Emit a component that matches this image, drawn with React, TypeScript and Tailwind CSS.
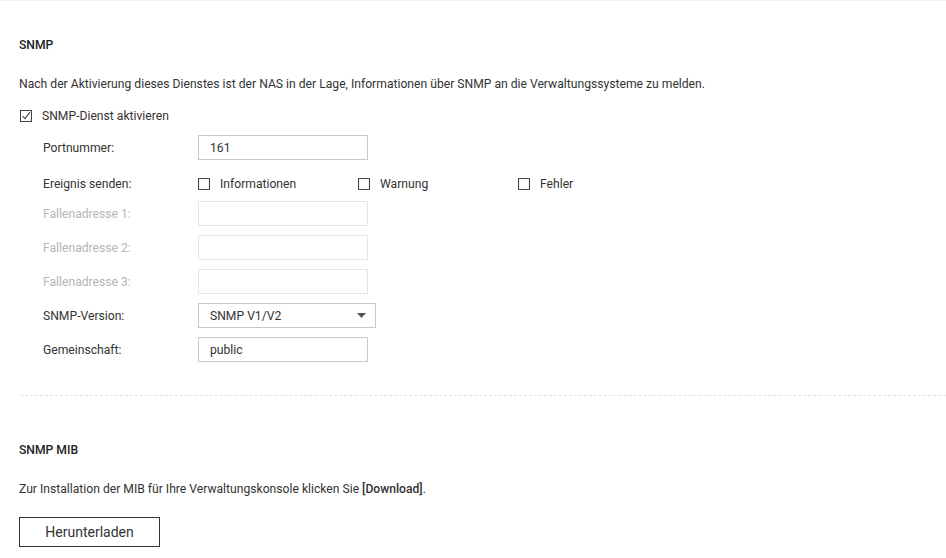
import React from 'react';

function Box({ checked, disabled }: { checked?: boolean; disabled?: boolean }) {
  return (
    <svg width="12" height="12" viewBox="0 0 12 12" className="shrink-0">
      <rect x="0.5" y="0.5" width="11" height="11" fill="#fff" stroke={disabled ? '#ccc' : '#444'} />
      {checked && <path d="M2.5 6.2 L5 8.7 L10 2.2" fill="none" stroke="#444" strokeWidth="1.1" />}
    </svg>
  );
}

function Row({ label, disabled, children }: { label: string; disabled?: boolean; children: React.ReactNode }) {
  return (
    <div className="flex items-center h-[25px] mb-[9px]">
      <div className={`w-[155px] pl-[24px] pt-px box-content ${disabled ? 'text-[#b5b5b5]' : ''}`}>{label}</div>
      {children}
    </div>
  );
}

function Field({ value, disabled }: { value?: string; disabled?: boolean }) {
  return (
    <div
      className={`w-[170px] h-[25px] border flex items-center px-[11px] pt-px ${
        disabled ? 'border-[#e6e6e6]' : 'border-[#c8c8c8]'
      }`}
    >
      {value}
    </div>
  );
}

export default function App() {
  return (
    <div
      className="w-[946px] h-[558px] bg-white text-[12.15px] text-[#333] overflow-hidden"
      style={{ fontFamily: 'Roboto, "Liberation Sans", sans-serif' }}
    >
      <div className="h-px bg-[#eef3fb]" />
      <div className="pl-[19px]">
        <h2 className="mt-[37px] leading-[14px] font-medium text-[#222]">SNMP</h2>
        <p className="mt-[25px] leading-[14px]">
          Nach der Aktivierung dieses Dienstes ist der NAS in der Lage, Informationen über SNMP an die Verwaltungssysteme zu melden.
        </p>
        <label className="mt-[18px] flex items-center h-[14px] gap-[10px] pl-px">
          <Box checked />
          <span>SNMP-Dienst aktivieren</span>
        </label>

        <div className="mt-[12px] flex flex-col">
          <Row label="Portnummer:">
            <Field value="161" />
          </Row>
          <div className="flex items-center h-[12px] mt-[9px] mb-[11px]">
            <div className="w-[155px] pl-[24px] box-content">Ereignis senden:</div>
            {['Informationen', 'Warnung', 'Fehler'].map((t) => (
              <div key={t} className="w-[160px] flex items-center gap-[10px]">
                <Box />
                <span>{t}</span>
              </div>
            ))}
          </div>
          <Row label="Fallenadresse 1:" disabled>
            <Field disabled />
          </Row>
          <Row label="Fallenadresse 2:" disabled>
            <Field disabled />
          </Row>
          <Row label="Fallenadresse 3:" disabled>
            <Field disabled />
          </Row>
          <Row label="SNMP-Version:">
            <div className="w-[178px] h-[25px] border border-[#c8c8c8] flex items-center justify-between pl-[11px] pr-[9px]">
              <span className="pt-px">SNMP V1/V2</span>
              <svg width="9" height="5" viewBox="0 0 9 5">
                <path d="M0 0 H9 L4.5 5 Z" fill="#555" />
              </svg>
            </div>
          </Row>
          <Row label="Gemeinschaft:">
            <Field value="public" />
          </Row>
        </div>
      </div>

      <div className="ml-[20px] mt-[24px] border-t border-dashed border-[#e2e2e2]" />

      <div className="pl-[19px]">
        <h2 className="mt-[47px] leading-[14px] font-medium text-[#222]">SNMP MIB</h2>
        <p className="mt-[25px] leading-[14px]">
          Zur Installation der MIB für Ihre Verwaltungskonsole klicken Sie <span className="font-medium">[Download]</span>.
        </p>
        <button className="mt-[21px] w-[141px] h-[30px] border border-[#333] text-[14px] text-[#333] bg-white">
          Herunterladen
        </button>
      </div>
    </div>
  );
}
